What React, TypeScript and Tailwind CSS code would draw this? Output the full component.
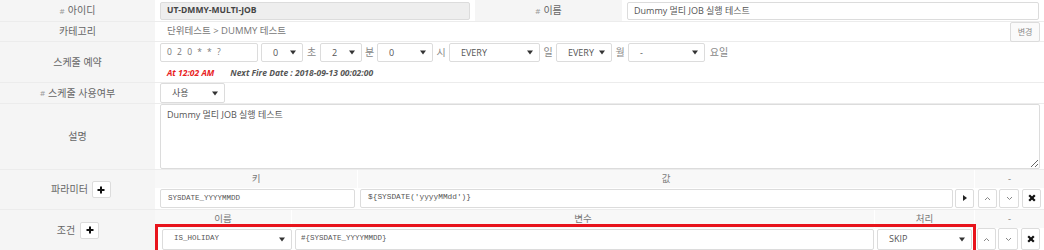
import React from 'react';

const FONT = "font-['Open_Sans','Noto_Sans_CJK_KR',sans-serif]";
const MONO = "font-['Liberation_Mono','Noto_Sans_CJK_KR',monospace]";

const Caret = () => (
  <svg width="6" height="5" viewBox="0 0 6 5" className="shrink-0">
    <path d="M0 0.5 L6 0.5 L3 4.5 Z" fill="#333" />
  </svg>
);

const Select = ({ text, className, mono }: { text: string; className: string; mono?: boolean }) => (
  <div
    className={`flex items-center justify-between bg-white border border-[#dcdcdc] rounded-[2px] pl-[11px] pr-[6px] text-[#555] ${
      mono ? `${MONO} text-[7.5px]` : 'text-[9px]'
    } ${className}`}
  >
    <span>{text}</span>
    <Caret />
  </div>
);

const SmallBtn = ({ children, className = '' }: { children: React.ReactNode; className?: string }) => (
  <div
    className={`flex items-center justify-center w-[19px] h-[19px] bg-white border border-[#dcdcdc] rounded-[2px] shrink-0 ${className}`}
  >
    {children}
  </div>
);

const Up = () => (
  <svg width="7" height="5" viewBox="0 0 7 5">
    <path d="M1 4 L3.5 1.5 L6 4" stroke="#888" strokeWidth="1" fill="none" />
  </svg>
);
const Down = () => (
  <svg width="7" height="5" viewBox="0 0 7 5">
    <path d="M1 1 L3.5 3.5 L6 1" stroke="#888" strokeWidth="1" fill="none" />
  </svg>
);
const Cross = () => (
  <svg width="8" height="8" viewBox="0 0 8 8">
    <path d="M1.2 1.2 L6.8 6.8 M6.8 1.2 L1.2 6.8" stroke="#111" strokeWidth="2.2" />
  </svg>
);
const Play = () => (
  <svg width="4" height="6" viewBox="0 0 4 6">
    <path d="M0 0 L4 3 L0 6 Z" fill="#222" />
  </svg>
);
const PlusBtn = () => (
  <div className="flex items-center justify-center w-[19px] h-[17px] bg-white border border-[#dcdcdc] rounded-[2px]">
    <svg width="8" height="8" viewBox="0 0 8 8">
      <path d="M4 0.5 V7.5 M0.5 4 H7.5" stroke="#111" strokeWidth="2" />
    </svg>
  </div>
);

const Label = ({ children, className = '' }: { children: React.ReactNode; className?: string }) => (
  <div
    className={`flex items-center justify-center bg-[#f5f5f5] text-[10px] text-[#666] shrink-0 ${className}`}
  >
    {children}
  </div>
);

const Unit = ({ t, className }: { t: string; className: string }) => (
  <span className={`text-center text-[10px] text-[#888] shrink-0 ${className}`}>{t}</span>
);

export default function App() {
  return (
    <div className={`w-[1044px] h-[250px] overflow-hidden bg-white ${FONT}`}>
      {/* 아이디 / 이름 */}
      <div className="flex h-[22px] border-b border-[#ececec]">
        <Label className="w-[155px]">
          <span className="text-[#999] mr-[3px] text-[8px]">#</span>아이디
        </Label>
        <div className="flex items-center w-[320px] px-[5px]">
          <div className="flex items-center w-full h-[18px] bg-[#eeeeee] border border-[#dcdcdc] rounded-[2px] pl-[6px] text-[8.5px] font-bold text-[#444]">
            UT-DMMY-MULTI-JOB
          </div>
        </div>
        <Label className="w-[147px]">
          <span className="text-[#999] mr-[3px] text-[8px]">#</span>이름
        </Label>
        <div className="flex items-center flex-1 px-[5px]">
          <div className="flex items-center w-full h-[18px] bg-white border border-[#dcdcdc] rounded-[2px] pl-[6px] text-[9px] text-[#555]">
            Dummy 멀티 JOB 실행 테스트
          </div>
        </div>
      </div>

      {/* 카테고리 */}
      <div className="flex h-[20px] border-b border-[#ececec]">
        <Label className="w-[155px]">카테고리</Label>
        <div className="flex items-center justify-between flex-1 pl-[12px] pr-[4px]">
          <span className="text-[9.5px] text-[#777]">단위테스트 &gt; DUMMY 테스트</span>
          <div className="flex items-center justify-center w-[30px] h-[20px] bg-[#fafafa] border border-[#dcdcdc] rounded-[2px] text-[8px] text-[#888]">
            변경
          </div>
        </div>
      </div>

      {/* 스케줄 예약 */}
      <div className="flex h-[41px] border-b border-[#ececec]">
        <Label className="w-[155px]">스케줄 예약</Label>
        <div className="flex flex-col flex-1 pl-[5px] pt-[1px]">
          <div className="flex items-center h-[19px]">
            <div className="flex items-center w-[98px] h-[19px] bg-white border border-[#dcdcdc] rounded-[2px] pl-[6px] text-[8.5px] tracking-[1.5px] text-[#777]">
              0 2 0 * * ?
            </div>
            <Select text="0" className="w-[42px] h-[19px] ml-[3px]" />
            <Unit t="초" className="w-[17px]" />
            <Select text="2" className="w-[42px] h-[19px]" />
            <Unit t="분" className="w-[15px]" />
            <Select text="0" className="w-[56px] h-[19px]" />
            <Unit t="시" className="w-[16px]" />
            <Select text="EVERY" className="w-[91px] h-[19px]" />
            <Unit t="일" className="w-[16px]" />
            <Select text="EVERY" className="w-[56px] h-[19px]" />
            <Unit t="월" className="w-[16px]" />
            <Select text="-" className="w-[77px] h-[19px]" />
            <Unit t="요일" className="w-[28px]" />
          </div>
          <div className="flex items-center pl-[7px] mt-[5px] text-[8.5px] font-bold italic">
            <span className="text-[#e8211d]">At 12:02 AM</span>
            <span className="ml-[16px] text-[#555]">Next Fire Date : 2018-09-13 00:02:00</span>
          </div>
        </div>
      </div>

      {/* 스케줄 사용여부 */}
      <div className="flex h-[21px] border-b border-[#ececec]">
        <Label className="w-[155px]">
          <span className="text-[#999] mr-[3px] text-[8px]">#</span>스케줄 사용여부
        </Label>
        <div className="flex items-center flex-1 pl-[5px]">
          <Select text="사용" className="w-[65px] h-[20px]" />
        </div>
      </div>

      {/* 설명 */}
      <div className="flex h-[66px] border-b border-[#ececec]">
        <Label className="w-[155px]">설명</Label>
        <div className="flex items-start flex-1 pl-[5px]">
          <textarea
            readOnly
            defaultValue="Dummy 멀티 JOB 실행 테스트"
            className="w-[880px] h-[65px] bg-white border border-[#dcdcdc] rounded-[2px] px-[6px] py-[3px] text-[9px] text-[#555] outline-none"
          />
        </div>
      </div>

      {/* 파라미터 */}
      <div className="flex h-[40px] border-b border-[#ececec]">
        <Label className="w-[155px] gap-[4px] pl-[7px]">
          <span>파라미터</span>
          <PlusBtn />
        </Label>
        <div className="flex flex-col flex-1">
          <div className="flex h-[18px] bg-[#f8f8f8] text-[9.5px] text-[#777]">
            <div className="flex items-center justify-center w-[203px] border-r border-white">키</div>
            <div className="flex items-center justify-center w-[617px] border-r border-white">값</div>
            <div className="flex items-center justify-center flex-1">-</div>
          </div>
          <div className="flex items-center h-[22px]">
            <div className="flex items-center w-[195px] h-[19px] ml-[5px] bg-white border border-[#dcdcdc] rounded-[2px] pl-[7px] text-[7.5px] text-[#555]">
              <span className={MONO}>SYSDATE_YYYYMMDD</span>
            </div>
            <div className="flex items-center w-[593px] h-[19px] ml-[5px] bg-white border border-[#dcdcdc] rounded-[2px] pl-[7px] text-[7.8px] text-[#555]">
              <span className={MONO}>${"{"}SYSDATE('yyyyMMdd'){"}"}</span>
            </div>
            <SmallBtn className="ml-[2px]">
              <Play />
            </SmallBtn>
            <SmallBtn className="ml-[4px]">
              <Up />
            </SmallBtn>
            <SmallBtn className="ml-[2px] w-[20px]">
              <Down />
            </SmallBtn>
            <SmallBtn className="ml-[3px] w-[18px]">
              <Cross />
            </SmallBtn>
          </div>
        </div>
      </div>

      {/* 조건 */}
      <div className="flex h-[40px]">
        <Label className="w-[155px] gap-[5px] pl-[1px]">
          <span>조건</span>
          <PlusBtn />
        </Label>
        <div className="flex flex-col flex-1">
          <div className="flex h-[18px] bg-[#f8f8f8] text-[9.5px] text-[#777]">
            <div className="flex items-center justify-center w-[137px] border-r border-white">이름</div>
            <div className="flex items-center justify-center w-[583px] border-r border-white">변수</div>
            <div className="flex items-center justify-center w-[100px] border-r border-white">처리</div>
            <div className="flex items-center justify-center flex-1">-</div>
          </div>
          <div className="flex items-start h-[22px]">
            <div className="relative -mt-[4px] flex items-center w-[821px] h-[30px] border-[3px] border-[#e8141c] pl-[4px] pr-[1px]">
              <Select text="IS_HOLIDAY" mono className="w-[130px] h-[21px]" />
              <div className="flex items-center w-[579px] h-[21px] ml-[3px] bg-white border border-[#dcdcdc] rounded-[2px] pl-[5px] text-[7.5px] text-[#555]">
                <span className={MONO}>#{"{"}SYSDATE_YYYYMMDD{"}"}</span>
              </div>
              <Select text="SKIP" className="w-[95px] h-[21px] ml-[3px]" />
            </div>
            <SmallBtn className="ml-[1px] h-[22px]">
              <Up />
            </SmallBtn>
            <SmallBtn className="ml-[2px] w-[20px] h-[22px]">
              <Down />
            </SmallBtn>
            <SmallBtn className="ml-[3px] w-[18px] h-[22px]">
              <Cross />
            </SmallBtn>
          </div>
        </div>
      </div>
    </div>
  );
}
